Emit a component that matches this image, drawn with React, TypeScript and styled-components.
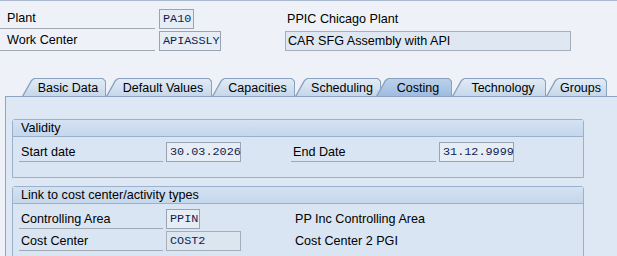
import React from 'react';
import styled, { createGlobalStyle } from 'styled-components';

const GlobalStyle = createGlobalStyle`
  html, body {
    margin: 0;
    padding: 0;
    background: #eef2f8;
  }
  * {
    box-sizing: border-box;
  }
`;

const tabs = [
  { label: 'Basic Data', width: 84 },
  { label: 'Default Values', width: 106 },
  { label: 'Capacities', width: 83 },
  { label: 'Scheduling', width: 86 },
  { label: 'Costing', width: 76, shift: -5, active: true },
  { label: 'Technology', width: 94 },
  { label: 'Groups', width: 61 },
];

const App: React.FC = () => {
  return (
    <>
      <GlobalStyle />
      <Screen>
        <HeaderArea>
          <HeaderRow>
            <HeaderLabel>Plant</HeaderLabel>
            <InputCell>
              <Field $width={35}>PA10</Field>
            </InputCell>
            <PlainText>PPIC Chicago Plant</PlainText>
          </HeaderRow>
          <HeaderRow>
            <HeaderLabel>Work Center</HeaderLabel>
            <InputCell>
              <Field $width={62}>APIASSLY</Field>
            </InputCell>
            <DescBox>CAR SFG Assembly with API</DescBox>
          </HeaderRow>
        </HeaderArea>

        <TabStrip>
          {tabs.map((t) => (
            <Tab key={t.label} $width={t.width} $shift={t.shift ?? 0} $active={!!t.active}>
              <TabText>{t.label}</TabText>
            </Tab>
          ))}
        </TabStrip>

        <Panel>
          <GroupBox>
            <GroupHeader>Validity</GroupHeader>
            <GroupBody>
              <GroupRow>
                <RowLabel>Start date</RowLabel>
                <InputCell>
                  <Field $width={75}>30.03.2026</Field>
                </InputCell>
                <RowLabel>End Date</RowLabel>
                <InputCell>
                  <Field $width={75}>31.12.9999</Field>
                </InputCell>
              </GroupRow>
            </GroupBody>
          </GroupBox>

          <GroupBox>
            <GroupHeader>Link to cost center/activity types</GroupHeader>
            <GroupBody $gap={2}>
              <GroupRow>
                <RowLabel>Controlling Area</RowLabel>
                <InputCell>
                  <Field $width={34}>PPIN</Field>
                </InputCell>
                <RowText>PP Inc Controlling Area</RowText>
              </GroupRow>
              <GroupRow>
                <RowLabel>Cost Center</RowLabel>
                <InputCell>
                  <Field $width={75} $plain>COST2</Field>
                </InputCell>
                <RowText>Cost Center 2 PGI</RowText>
              </GroupRow>
            </GroupBody>
          </GroupBox>
        </Panel>
      </Screen>
    </>
  );
};

const Screen = styled.div`
  width: 617px;
  height: 256px;
  overflow: hidden;
  background: #eef2f8;
  border-top: 1px solid #a9b9ce;
  font-family: 'Liberation Sans', Arial, sans-serif;
  font-size: 12.6px;
  color: #000;
`;

const HeaderArea = styled.div`
  display: flex;
  flex-direction: column;
  gap: 2px;
  padding-top: 8px;
`;

const HeaderRow = styled.div`
  display: grid;
  grid-template-columns: 159px 126px 1fr;
  height: 20px;
  align-items: stretch;
`;

const HeaderLabel = styled.div`
  width: 155px;
  padding-left: 7px;
  border-bottom: 1px solid #a3a9b1;
  display: flex;
  align-items: center;
  line-height: 1;
`;

const InputCell = styled.div`
  display: flex;
  align-items: stretch;
`;

const Field = styled.div<{ $width: number; $plain?: boolean }>`
  width: ${(p) => p.$width}px;
  height: 20px;
  padding-left: 3px;
  border: 1px solid ${(p) => (p.$plain ? '#a7aeb8' : '#9aa4b2')};
  background: ${(p) => (p.$plain ? '#dce6f1' : '#e6edf5')};
  font-family: 'Liberation Mono', 'Courier New', monospace;
  font-size: 11.8px;
  color: #101c50;
  display: flex;
  align-items: center;
  white-space: nowrap;
`;

const PlainText = styled.div`
  padding-left: 2px;
  display: flex;
  align-items: center;
`;

const DescBox = styled.div`
  width: 286px;
  height: 20px;
  padding-left: 2px;
  border: 1px solid #a6b0bd;
  background: #dfe8f2;
  display: flex;
  align-items: center;
`;

const TabStrip = styled.div`
  display: flex;
  height: 18px;
  margin-top: 27px;
  padding-left: 22px;
`;

const Tab = styled.div<{ $width: number; $shift: number; $active: boolean }>`
  position: relative;
  z-index: ${(p) => (p.$active ? 2 : 1)};
  flex: 0 0 auto;
  width: ${(p) => p.$width}px;
  height: 18px;
  margin-left: ${(p) => p.$shift}px;
  padding-left: 8px;
  display: flex;
  align-items: center;
  justify-content: center;
  background: #8aa1bf;
  clip-path: polygon(0 100%, 9px 2px, 12px 0, calc(100% - 3px) 0, 100% 3px, 100% 100%);
  font-size: 12.5px;
  color: #000;

  &::before {
    content: '';
    position: absolute;
    inset: 0;
    clip-path: polygon(
      1.6px 100%,
      10px 3px,
      12.5px 1px,
      calc(100% - 3.5px) 1px,
      calc(100% - 1px) 3.5px,
      calc(100% - 1px) 100%
    );
    background: ${(p) =>
      p.$active
        ? 'linear-gradient(#bcd2ea, #9ebce1)'
        : 'linear-gradient(#e3ecf6, #c6d7ea)'};
  }
`;

const TabText = styled.span`
  position: relative;
  padding-top: 1px;
`;

const Panel = styled.div`
  margin-left: 5px;
  height: 200px;
  padding: 22px 0 0 6px;
  border-top: 1px solid #8ea5c2;
  border-left: 1px solid #8ea5c2;
  background: #dde8f4;
  display: flex;
  flex-direction: column;
  gap: 8px;
`;

const GroupBox = styled.div`
  width: 572px;
  border: 1px solid #9bb0cb;
  border-radius: 3px 3px 0 0;
  background: #d9e5f2;
`;

const GroupHeader = styled.div`
  height: 17px;
  padding-left: 8px;
  border-bottom: 1px solid #9bb0cb;
  background: linear-gradient(#d4e2f2, #c5d7ec);
  display: flex;
  align-items: center;
`;

const GroupBody = styled.div<{ $gap?: number }>`
  display: flex;
  flex-direction: column;
  gap: ${(p) => p.$gap ?? 0}px;
  padding: 5px 0 15px 6px;
`;

const GroupRow = styled.div`
  display: grid;
  grid-template-columns: 147px 125px 148px 1fr;
  height: 20px;
`;

const RowLabel = styled.div`
  width: calc(100% - 3px);
  padding-left: 2px;
  border-bottom: 1px solid #a3a9b1;
  display: flex;
  align-items: center;
`;

const RowText = styled.div`
  padding-left: 4px;
  display: flex;
  align-items: center;
`;

export default App;
